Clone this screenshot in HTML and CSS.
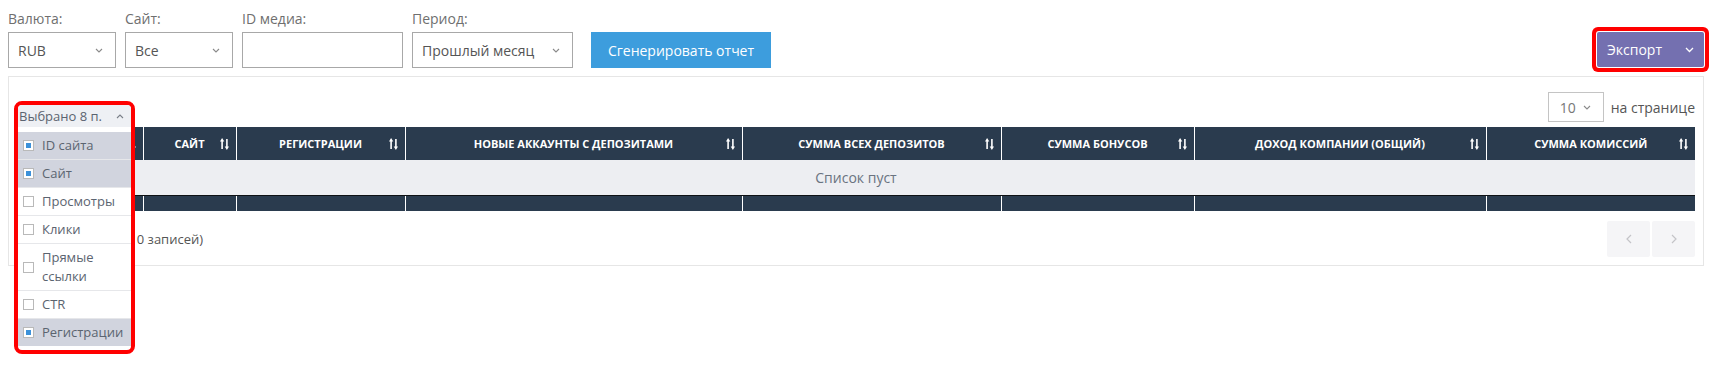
FILE: index.html
```html
<!DOCTYPE html>
<html lang="ru">
<head>
    <meta charset="UTF-8">
    <meta name="viewport" content="width=device-width, initial-scale=1.0">
    <title>Отчет по медиа</title>
    <link rel="stylesheet" href="styles.css">
</head>
<body>
    <div class="page">
        <!-- фильтры -->
        <div class="filters">
            <div class="field">
                <label class="field-label">Валюта:</label>
                <div class="select w-sm">
                    <span>RUB</span>
                    <svg class="caret" width="8" height="5" viewBox="0 0 8 5"><path d="M1 1l3 3 3-3" fill="none" stroke="#8a8a8a" stroke-width="1.1"/></svg>
                </div>
            </div>
            <div class="field">
                <label class="field-label">Сайт:</label>
                <div class="select w-sm">
                    <span>Все</span>
                    <svg class="caret" width="8" height="5" viewBox="0 0 8 5"><path d="M1 1l3 3 3-3" fill="none" stroke="#8a8a8a" stroke-width="1.1"/></svg>
                </div>
            </div>
            <div class="field">
                <label class="field-label">ID медиа:</label>
                <input class="input w-md" type="text">
            </div>
            <div class="field">
                <label class="field-label">Период:</label>
                <div class="select w-md">
                    <span>Прошлый месяц</span>
                    <svg class="caret" width="8" height="5" viewBox="0 0 8 5"><path d="M1 1l3 3 3-3" fill="none" stroke="#8a8a8a" stroke-width="1.1"/></svg>
                </div>
            </div>
            <button class="btn btn-primary">Сгенерировать отчет</button>
            <button class="btn btn-export marked">
                <span>Экспорт</span>
                <svg width="9" height="6" viewBox="0 0 9 6"><path d="M1 1l3.5 3.5 3.5-3.5" fill="none" stroke="#fff" stroke-width="1.3"/></svg>
            </button>
        </div>

        <!-- таблица -->
        <div class="card">
            <div class="toolbar">
                <div class="per-page">
                    <div class="select select-sm">
                        <span>10</span>
                        <svg class="caret" width="8" height="5" viewBox="0 0 8 5"><path d="M1 1l3 3 3-3" fill="none" stroke="#8a8a8a" stroke-width="1.1"/></svg>
                    </div>
                    <span>на странице</span>
                </div>
            </div>

            <table class="grid">
                <colgroup>
                    <col style="width:126px"><col style="width:93px"><col style="width:169px"><col style="width:337px">
                    <col style="width:259px"><col style="width:193px"><col style="width:292px"><col style="width:209px">
                </colgroup>
                <thead>
                    <tr>
                        <th>ID сайта<i class="sort"></i></th>
                        <th>Сайт<i class="sort"></i></th>
                        <th>Регистрации<i class="sort"></i></th>
                        <th>Новые аккаунты с депозитами<i class="sort"></i></th>
                        <th>Сумма всех депозитов<i class="sort"></i></th>
                        <th>Сумма бонусов<i class="sort"></i></th>
                        <th>Доход компании (общий)<i class="sort"></i></th>
                        <th>Сумма комиссий<i class="sort"></i></th>
                    </tr>
                </thead>
                <tbody>
                    <tr><td class="empty" colspan="8">Список пуст</td></tr>
                </tbody>
                <tfoot>
                    <tr><th></th><th></th><th></th><th></th><th></th><th></th><th></th><th></th></tr>
                </tfoot>
            </table>

            <div class="card-footer">
                <span class="info">Записи 0 - 0 (всего 0 записей)</span>
                <div class="pager">
                    <button class="pager-btn"><svg width="6" height="10" viewBox="0 0 6 10"><path d="M5 1L1 5l4 4" fill="none" stroke="#c4c4c8" stroke-width="1.2"/></svg></button>
                    <button class="pager-btn"><svg width="6" height="10" viewBox="0 0 6 10"><path d="M1 1l4 4-4 4" fill="none" stroke="#c4c4c8" stroke-width="1.2"/></svg></button>
                </div>
            </div>

            <!-- открытый выбор колонок -->
            <div class="col-picker">
                <div class="col-picker-head">
                    <span>Выбрано 8 п.</span>
                    <svg width="8" height="5" viewBox="0 0 8 5"><path d="M1 4l3-3 3 3" fill="none" stroke="#7a7f88" stroke-width="1.1"/></svg>
                </div>
                <ul class="col-list">
                    <li class="on"><i class="check"></i>ID сайта</li>
                    <li class="on"><i class="check"></i>Сайт</li>
                    <li><i class="check"></i>Просмотры</li>
                    <li><i class="check"></i>Клики</li>
                    <li><i class="check"></i>Прямые ссылки</li>
                    <li><i class="check"></i>CTR</li>
                    <li class="on"><i class="check"></i>Регистрации</li>
                </ul>
            </div>
        </div>
    </div>
</body>
</html>
```

FILE: styles.css
```css
/* общие */
html, body {
    height: 100%;
}
body {
    margin: 0;
    font-family: "Open Sans", "Noto Sans", Arial, sans-serif;
    font-size: 14px;
    color: #555;
    background-color: #fff;
}
.page {
    box-sizing: border-box;
    min-height: 100%;
    padding: 9px 9px 0 8px;
}

/* фильтры */
.filters {
    display: flex;
    align-items: flex-end;
    gap: 9px;
}
.field {
    display: flex;
    flex-direction: column;
}
.field-label {
    line-height: 20px;
    margin-bottom: 3px;
    color: #6f6f6f;
}
.select, .input {
    box-sizing: border-box;
    height: 36px;
    border: 1px solid #a8a8a8;
    background: #fff;
    font: inherit;
    color: #555;
}
.select {
    display: flex;
    align-items: center;
    justify-content: space-between;
    padding: 0 12px 0 9px;
}
.w-sm { width: 108px; }
.w-md { width: 161px; }
.input {
    padding: 0 9px;
    outline: none;
}
.btn {
    box-sizing: border-box;
    height: 36px;
    border: none;
    font: inherit;
    color: #fff;
    cursor: pointer;
}
.btn-primary {
    width: 180px;
    margin-left: 9px;
    background-color: #3d9ddd;
}
.btn-export {
    margin-left: auto;
    width: 107px;
    height: 35px;
    margin-bottom: 1px;
    display: flex;
    align-items: center;
    justify-content: space-between;
    padding: 0 10px 0 10px;
    background-color: #7470b0;
    border-radius: 2px;
}
/* красная рамка-пометка */
.marked {
    box-shadow: 0 0 0 1px #fff, 0 0 0 5px #f00;
}

/* карточка с таблицей */
.card {
    position: relative;
    margin-top: 8px;
    border: 1px solid #e6e6e6;
    padding: 15px 8px 8px;
}
.toolbar {
    display: flex;
    justify-content: flex-end;
    margin-bottom: 5px;
}
.per-page {
    display: flex;
    align-items: center;
    gap: 7px;
}
.select-sm {
    width: 56px;
    height: 30px;
    padding: 0 12px 0 11px;
    border-color: #c4c4c4;
    color: #777;
}

.grid {
    width: 100%;
    table-layout: fixed;
    border-collapse: collapse;
}
.grid th {
    position: relative;
    height: 33px;
    padding: 0 18px;
    background-color: #2a3b4e;
    color: #fff;
    font-size: 11px;
    font-weight: 700;
    text-transform: uppercase;
    text-align: center;
    white-space: nowrap;
    border-left: 1px solid #fff;
}
.grid th:first-child {
    border-left: none;
}
.sort {
    position: absolute;
    right: 7px;
    top: 11px;
    width: 9px;
    height: 12px;
    background: no-repeat center / 9px 12px url("data:image/svg+xml,%3Csvg xmlns='http://www.w3.org/2000/svg' viewBox='0 0 9 12'%3E%3Cpath fill='%23fff' d='M2.1 0L4.3 3.4H2.9V11H1.3V3.4H0z M6.1 1h1.6v7.6H9L6.9 12 4.7 8.6h1.4z'/%3E%3C/svg%3E");
}
.empty {
    height: 35px;
    padding: 0;
    background-color: #edeef2;
    color: #6a7380;
    text-align: center;
}
.grid tfoot th {
    height: 15px;
    padding: 0;
    border-top: 1px solid #0e1115;
}

.card-footer {
    display: flex;
    align-items: center;
    justify-content: space-between;
    margin-top: 10px;
}
.info {
    font-size: 13px;
    color: #555;
}
.pager {
    display: flex;
    gap: 2px;
}
.pager-btn {
    width: 43px;
    height: 36px;
    border: none;
    border-radius: 2px;
    background-color: #f5f5f7;
    display: flex;
    align-items: center;
    justify-content: center;
}

/* выбор колонок (открытое меню) */
.col-picker {
    position: absolute;
    z-index: 2;
    left: 5px;
    top: 24px;
    width: 113px;
    border: 4px solid #f00;
    border-radius: 8px;
    background: #fff;
    font-size: 13px;
}
.col-picker-head {
    height: 22px;
    display: flex;
    align-items: center;
    justify-content: space-between;
    padding: 0 7px 0 1px;
    background-color: #eef0f4;
    color: #5b6470;
    border-radius: 4px 4px 0 0;
}
.col-list {
    list-style: none;
    margin: 0;
    padding: 5px 0 4px;
}
.col-list li {
    display: flex;
    align-items: center;
    gap: 8px;
    padding: 4px 5px;
    line-height: 19px;
    color: #5b6470;
    border-bottom: 1px solid #e6e7ea;
}
.col-list li:last-child {
    border-bottom: none;
}
.col-list li.on {
    background-color: #d1d4de;
}
.check {
    flex: none;
    box-sizing: border-box;
    width: 11px;
    height: 11px;
    border: 1px solid #b9b9b9;
    background: #fff;
    position: relative;
}
.on .check::after {
    content: "";
    position: absolute;
    left: 2px;
    top: 2px;
    width: 5px;
    height: 5px;
    background-color: #3c91d9;
}
```
